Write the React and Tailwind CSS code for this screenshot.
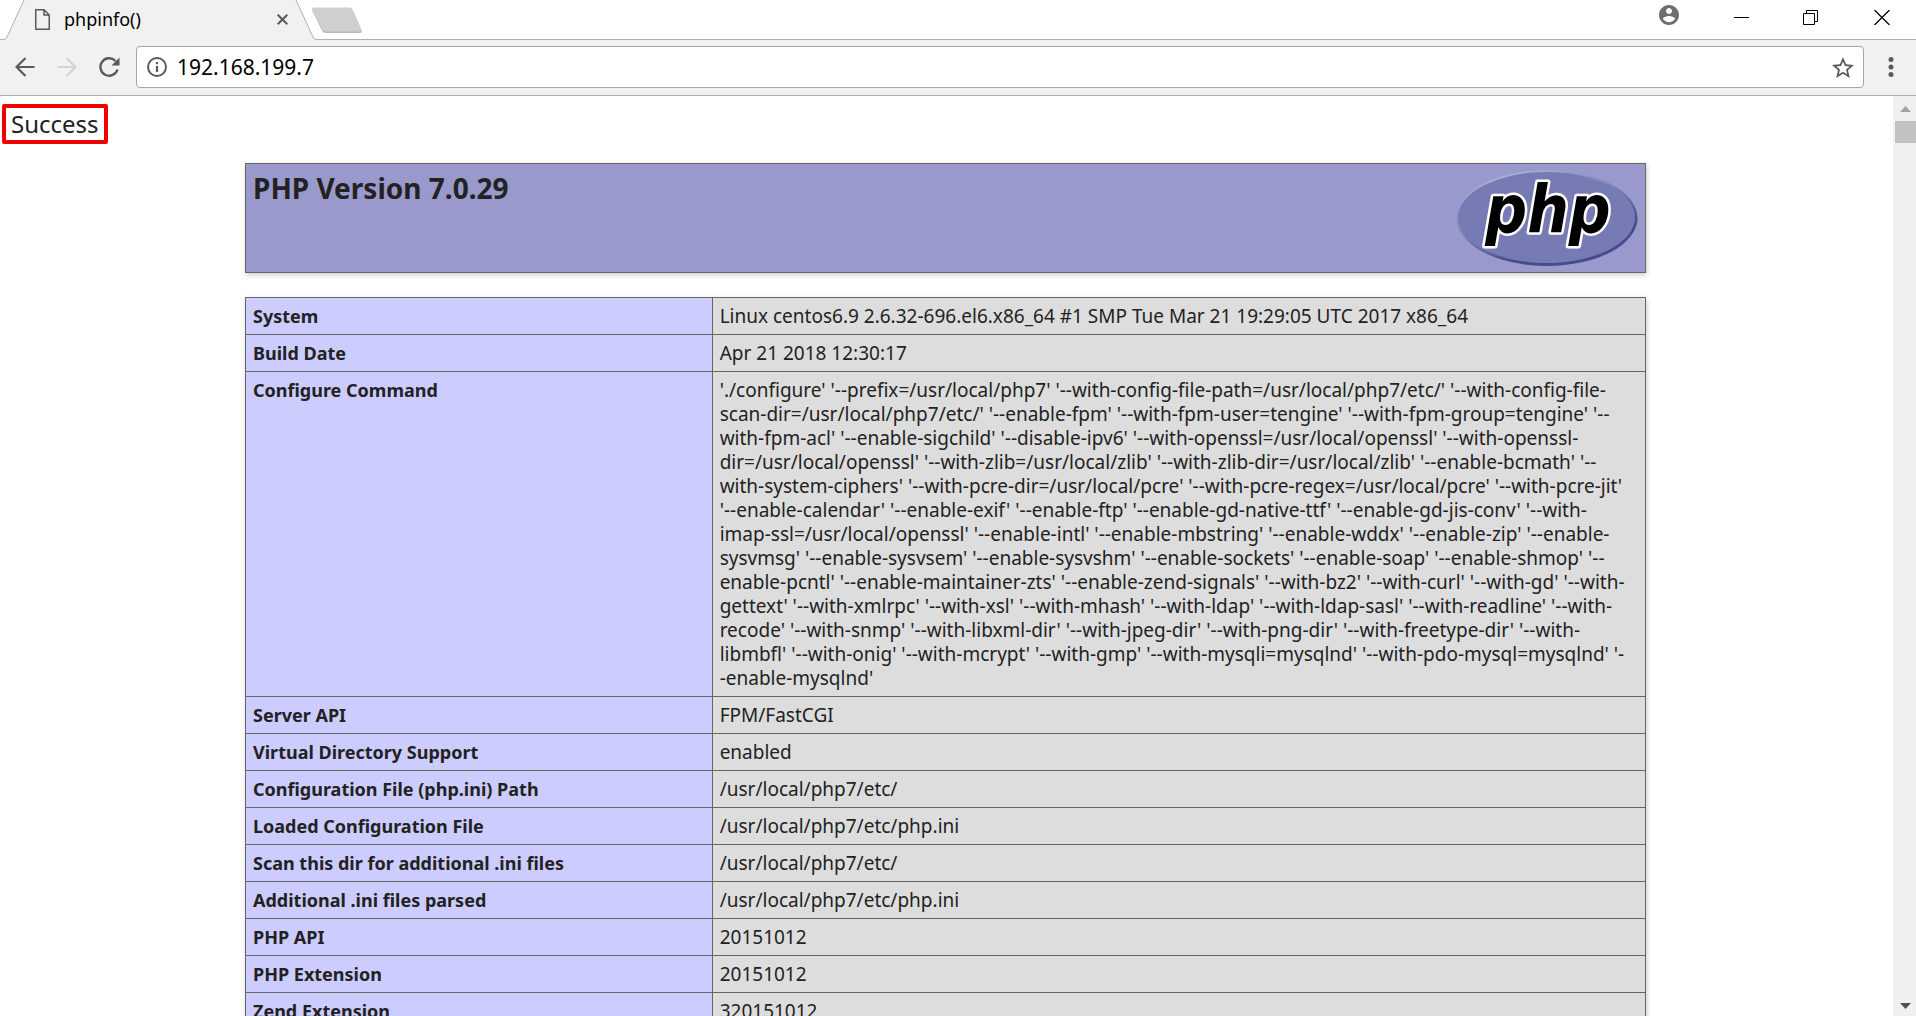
import { useState } from 'react'

const CONFIGURE_LINES = [
  "'./configure' '--prefix=/usr/local/php7' '--with-config-file-path=/usr/local/php7/etc/' '--with-config-file-",
  "scan-dir=/usr/local/php7/etc/' '--enable-fpm' '--with-fpm-user=tengine' '--with-fpm-group=tengine' '--",
  "with-fpm-acl' '--enable-sigchild' '--disable-ipv6' '--with-openssl=/usr/local/openssl' '--with-openssl-",
  "dir=/usr/local/openssl' '--with-zlib=/usr/local/zlib' '--with-zlib-dir=/usr/local/zlib' '--enable-bcmath' '--",
  "with-system-ciphers' '--with-pcre-dir=/usr/local/pcre' '--with-pcre-regex=/usr/local/pcre' '--with-pcre-jit'",
  "'--enable-calendar' '--enable-exif' '--enable-ftp' '--enable-gd-native-ttf' '--enable-gd-jis-conv' '--with-",
  "imap-ssl=/usr/local/openssl' '--enable-intl' '--enable-mbstring' '--enable-wddx' '--enable-zip' '--enable-",
  "sysvmsg' '--enable-sysvsem' '--enable-sysvshm' '--enable-sockets' '--enable-soap' '--enable-shmop' '--",
  "enable-pcntl' '--enable-maintainer-zts' '--enable-zend-signals' '--with-bz2' '--with-curl' '--with-gd' '--with-",
  "gettext' '--with-xmlrpc' '--with-xsl' '--with-mhash' '--with-ldap' '--with-ldap-sasl' '--with-readline' '--with-",
  "recode' '--with-snmp' '--with-libxml-dir' '--with-jpeg-dir' '--with-png-dir' '--with-freetype-dir' '--with-",
  "libmbfl' '--with-onig' '--with-mcrypt' '--with-gmp' '--with-mysqli=mysqlnd' '--with-pdo-mysql=mysqlnd' '-",
  "-enable-mysqlnd'",
]

const ROWS = [
  ['System', ['Linux centos6.9 2.6.32-696.el6.x86_64 #1 SMP Tue Mar 21 19:29:05 UTC 2017 x86_64']],
  ['Build Date', ['Apr 21 2018 12:30:17']],
  ['Configure Command', CONFIGURE_LINES],
  ['Server API', ['FPM/FastCGI']],
  ['Virtual Directory Support', ['enabled']],
  ['Configuration File (php.ini) Path', ['/usr/local/php7/etc/']],
  ['Loaded Configuration File', ['/usr/local/php7/etc/php.ini']],
  ['Scan this dir for additional .ini files', ['/usr/local/php7/etc/']],
  ['Additional .ini files parsed', ['/usr/local/php7/etc/php.ini']],
  ['PHP API', ['20151012']],
  ['PHP Extension', ['20151012']],
  ['Zend Extension', ['320151012']],
]

function TabStrip() {
  return (
    <div className="h-10 flex items-stretch justify-between border-b border-[#b0b0b0] bg-white">
      <div className="flex">
        <div className="relative w-[318px] -mb-px">
          <svg className="absolute inset-0" width="318" height="40" viewBox="0 0 318 40" aria-hidden="true">
            <path d="M0 39.5H4Q6 39.5 7 37L24 0H296L313 37Q314 39.5 317 39.5L318 40H0Z" fill="#f1f1f1" />
            <path d="M0 39.5H4Q6 39.5 7 37L24 0M296 0L313 37Q314 39.5 317 39.5" fill="none" stroke="#b0b0b0" />
          </svg>
          <div className="relative h-full flex items-center pl-[35px] pr-[30px] pb-[2px]">
            <svg width="15" height="21" viewBox="0 0 15 21" fill="none" stroke="#5a5a5a" strokeWidth="1.5" aria-hidden="true">
              <path d="M0.75 0.75H9L14.25 6V20.25H0.75ZM9 0.75V6H14.25" />
            </svg>
            <span className="ml-[14px] flex-1 text-[18px] leading-6 text-black">phpinfo()</span>
            <button aria-label="Close tab" className="flex">
              <svg width="11" height="11" viewBox="0 0 11 11" stroke="#5a5a5a" strokeWidth="2">
                <path d="M0.7 0.7L10.3 10.3M10.3 0.7L0.7 10.3" />
              </svg>
            </button>
          </div>
        </div>
        <button aria-label="New tab" className="self-start mt-[7px] -ml-[7px]">
          <svg width="52" height="27" viewBox="0 0 52 27">
            <path d="M3 1H38Q40.5 1 41.5 3L50.5 23Q51.5 26 49 26H15Q12 26 11 23.5L1.5 4Q0.5 1 3 1Z" fill="#b8b8b8" />
            <path d="M3 0.5H38Q40.5 0.5 41.5 2.5L50 22Q51 24.5 48.5 24.5H15Q12.5 24.5 11.5 22.5L1.5 3.5Q0.5 0.5 3 0.5Z" fill="#cfcfcf" />
          </svg>
        </button>
      </div>
      <div className="flex items-start">
        <button aria-label="Profile" className="mt-[5px] mr-[55px]">
          <svg width="20" height="20" viewBox="2 2 20 20" fill="#6e6e6e">
            <path d="M12 2C6.48 2 2 6.48 2 12s4.48 10 10 10 10-4.48 10-10S17.52 2 12 2zm0 3c1.66 0 3 1.34 3 3s-1.34 3-3 3-3-1.34-3-3 1.34-3 3-3zm0 14.2c-2.5 0-4.71-1.28-6-3.22.03-1.99 4-3.08 6-3.08 1.99 0 5.97 1.09 6 3.08-1.29 1.94-3.5 3.22-6 3.22z" />
          </svg>
        </button>
        <button aria-label="Minimize" className="mt-[10px] mr-[54px]">
          <svg width="15" height="15" viewBox="0 0 15 15" stroke="#000">
            <path d="M0 7.5H15" />
          </svg>
        </button>
        <button aria-label="Restore" className="mt-[10px] mr-14">
          <svg width="15" height="15" viewBox="0 0 15 15" fill="none" stroke="#000">
            <path d="M0.5 3.5H11.5V14.5H0.5ZM3.5 3.5V0.5H14.5V11.5H11.5" />
          </svg>
        </button>
        <button aria-label="Close" className="mt-[10px] mr-[26px]">
          <svg width="16" height="15" viewBox="0 0 16 15" stroke="#000" strokeWidth="1.3">
            <path d="M0.5 0L15.5 15M15.5 0L0.5 15" />
          </svg>
        </button>
      </div>
    </div>
  )
}

function Toolbar() {
  const [url, setUrl] = useState('192.168.199.7')

  return (
    <div className="h-14 flex items-center bg-[#f1f1f1] border-b border-[#b0b0b0] pb-px">
      <button aria-label="Back" className="ml-[15px]">
        <svg width="20" height="20" viewBox="0 0 20 20" fill="none" stroke="#5a5a5a" strokeWidth="2.2">
          <path d="M19.5 10H2M10.5 1L1.5 10L10.5 19" />
        </svg>
      </button>
      <button aria-label="Forward" disabled className="ml-[22px]">
        <svg width="20" height="20" viewBox="0 0 20 20" fill="none" stroke="#d4d4d4" strokeWidth="2.2">
          <path d="M0.5 10H18M9.5 1L18.5 10L9.5 19" />
        </svg>
      </button>
      <button aria-label="Reload" className="ml-[22px]">
        <svg width="21" height="20" viewBox="0 0 21 20" fill="none">
          <path d="M18.5 12.5A8.7 8.7 0 1 1 16.5 4" stroke="#5a5a5a" strokeWidth="2.4" />
          <path d="M20.5 0.5V8.5H12.5Z" fill="#5a5a5a" />
        </svg>
      </button>
      <div className="ml-4 h-[42px] flex-1 flex items-center rounded border border-[#a6a6a6] bg-white pl-[10px] pr-[9px]">
        <svg width="20" height="20" viewBox="0 0 20 20" fill="none" aria-hidden="true">
          <circle cx="10" cy="10" r="9" stroke="#5a5a5a" strokeWidth="2" />
          <path d="M10 9V15M10 5V7.2" stroke="#5a5a5a" strokeWidth="2.2" />
        </svg>
        <input
          aria-label="Address"
          value={url}
          onChange={(e) => setUrl(e.target.value)}
          className="ml-[10px] flex-1 bg-transparent text-[21px] leading-7 text-black outline-none"
        />
        <button aria-label="Bookmark this page">
          <svg width="22" height="21" viewBox="2 2 20 19" fill="#5a5a5a">
            <path d="M22 9.24l-7.19-.62L12 2 9.19 8.63 2 9.24l5.46 4.73L5.82 21 12 17.27 18.18 21l-1.63-7.03L22 9.24zM12 15.4l-3.76 2.27 1-4.28-3.32-2.88 4.38-.38L12 6.1l1.71 4.04 4.38.38-3.32 2.88 1 4.28L12 15.4z" />
          </svg>
        </button>
      </div>
      <button aria-label="Menu" className="ml-6 mr-[22px]">
        <svg width="6" height="22" viewBox="0 0 6 22" fill="#5a5a5a">
          <circle cx="3" cy="3.5" r="2.5" />
          <circle cx="3" cy="11" r="2.5" />
          <circle cx="3" cy="18.5" r="2.5" />
        </svg>
      </button>
    </div>
  )
}

function PhpLogo() {
  return (
    <svg width="182" height="96" viewBox="0 0 182 96" role="img" aria-label="PHP logo" className="shrink-0">
      <defs>
        <linearGradient id="rim" x1="0.2" y1="0" x2="0.8" y2="1">
          <stop offset="0" stopColor="#b4b6e0" />
          <stop offset="0.45" stopColor="#7a7db6" />
          <stop offset="0.75" stopColor="#484a8e" />
          <stop offset="1" stopColor="#484a8e" />
        </linearGradient>
      </defs>
      <ellipse cx="91" cy="48" rx="90.5" ry="48" fill="url(#rim)" />
      <ellipse cx="90.5" cy="47.5" rx="88.5" ry="45.5" fill="#777bb3" />
      <text
        x="92"
        y="62"
        textAnchor="middle"
        fontSize="65"
        stroke="#fff"
        strokeWidth="5"
        strokeLinejoin="round"
        paintOrder="stroke"
        className="font-['DejaVu_Sans_Condensed','DejaVu_Sans',sans-serif] font-bold italic"
      >
        php
      </text>
    </svg>
  )
}

function InfoTable() {
  return (
    <table className="mt-6 w-full table-fixed border-collapse shadow-[1px_2px_5px_#ccc]">
      <tbody>
        {ROWS.map(([name, lines]) => (
          <tr key={name}>
            <th
              scope="row"
              className="w-1/3 border border-[#666] bg-[#ccccff] px-[7px] py-[6px] text-left align-top text-[18px] leading-6 font-bold"
            >
              {name}
            </th>
            <td className="border border-[#666] bg-[#dddddd] px-[7px] py-[6px] align-top text-[19px] leading-6">
              {lines.map((line) => (
                <div key={line} className="whitespace-nowrap">{line}</div>
              ))}
            </td>
          </tr>
        ))}
      </tbody>
    </table>
  )
}

function Scrollbar() {
  return (
    <div className="w-[23px] shrink-0 flex flex-col items-end justify-between bg-[#f0f0f0]" aria-hidden="true">
      <div className="flex flex-col items-end">
        <svg className="mt-[10px] mr-[5px]" width="11" height="6" viewBox="0 0 11 6">
          <path d="M0 6L5.5 0L11 6Z" fill="#a3a3a3" />
        </svg>
        <div className="mt-[9px] h-[22px] w-[21px] bg-[#c1c1c1]" />
      </div>
      <svg className="mb-[7px] mr-[5px]" width="11" height="6" viewBox="0 0 11 6">
        <path d="M0 0L5.5 6L11 0Z" fill="#505050" />
      </svg>
    </div>
  )
}

function App() {
  return (
    <div className="h-screen flex flex-col overflow-hidden bg-white font-['Noto_Sans','Open_Sans',sans-serif] text-[#222]">
      <TabStrip />
      <Toolbar />
      <div className="flex-1 min-h-0 flex">
        <main className="flex-1 min-w-0 overflow-hidden pr-[2px]">
          <div className="pt-2 pl-[2px]">
            <p className="w-fit rounded-[2px] border-4 border-[#f00000] px-[5px] text-[24px] leading-8">Success</p>
          </div>
          <div className="mx-auto mt-[19px] w-full max-w-[1401px]">
            <header className="flex items-start justify-between border border-[#666] bg-[#9999cc] px-[7px] py-[6px] shadow-[1px_2px_5px_#ccc]">
              <h1 className="text-[28px] leading-9 font-bold">PHP Version 7.0.29</h1>
              <PhpLogo />
            </header>
            <InfoTable />
          </div>
        </main>
        <Scrollbar />
      </div>
    </div>
  )
}

export default App
